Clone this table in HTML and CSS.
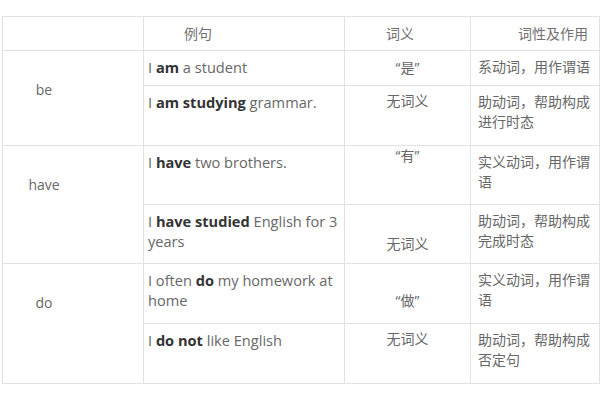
FILE: index.html
```html
<!DOCTYPE html>
<html lang="zh-CN">
<head>
<meta charset="utf-8">
<title>be / have / do</title>
<link rel="stylesheet" href="styles.css">
</head>
<body>
<table class="grid">
  <colgroup>
    <col class="c-word">
    <col class="c-ex">
    <col class="c-mean">
    <col class="c-role">
  </colgroup>
  <tr class="r-head">
    <th class="h-word"></th>
    <th class="h-ex">例句</th>
    <th class="h-mean">词义</th>
    <th class="h-role">词性及作用</th>
  </tr>
  <tr class="r-35">
    <td class="word" rowspan="2">be</td>
    <td class="ex">I <b>am</b> a student</td>
    <td class="mean mid">“是”</td>
    <td class="role">系动词，用作谓语</td>
  </tr>
  <tr class="r-60">
    <td class="ex">I <b>am studying</b> grammar.</td>
    <td class="mean">无词义</td>
    <td class="role">助动词，帮助构成进行时态</td>
  </tr>
  <tr class="r-59">
    <td class="word" rowspan="2">have</td>
    <td class="ex">I <b>have</b> two brothers.</td>
    <td class="mean hi">“有”</td>
    <td class="role">实义动词，用作谓语</td>
  </tr>
  <tr class="r-59">
    <td class="ex">I <b>have studied</b> English for 3 years</td>
    <td class="mean low">无词义</td>
    <td class="role">助动词，帮助构成完成时态</td>
  </tr>
  <tr class="r-60">
    <td class="word" rowspan="2">do</td>
    <td class="ex">I often <b>do</b> my homework at home</td>
    <td class="mean low2">“做”</td>
    <td class="role">实义动词，用作谓语</td>
  </tr>
  <tr class="r-60">
    <td class="ex">I <b>do not</b> like English</td>
    <td class="mean">无词义</td>
    <td class="role">助动词，帮助构成否定句</td>
  </tr>
</table>
</body>
</html>
```

FILE: styles.css
```css
html, body {
  margin: 0;
  padding: 0;
  background: #ffffff;
}

body {
  padding: 16px 0 0 2px;
  font-family: "Open Sans", "Noto Sans CJK SC", sans-serif;
  font-size: 14px;
  line-height: 20px;
  color: #676767;
}

.grid {
  border-collapse: collapse;
  table-layout: fixed;
  width: 597px;
}

.c-word { width: 141px; }
.c-ex { width: 201px; }
.c-mean { width: 126px; }
.c-role { width: 129px; }

.grid th,
.grid td {
  border: 1px solid #e2e2e2;
  vertical-align: top;
  text-align: left;
}

.grid th {
  font-weight: normal;
  vertical-align: middle;
  color: #707070;
  padding: 0;
}

.grid .r-head { height: 34px; }
.grid .r-35 { height: 35px; }
.grid .r-59 { height: 59px; }
.grid .r-60 { height: 60px; }

.grid .h-ex { padding-left: 40px; }
.grid .h-mean { padding-left: 41px; }
.grid .h-role { padding-left: 47px; }

.grid .word {
  text-align: center;
  padding: 29px 58px 0 0;
}

.grid .ex {
  font-size: 14.6px;
  padding: 6px 6px 0 4px;
}

.grid .ex b {
  font-weight: 700;
  color: #333333;
}

.grid .mean {
  text-align: center;
  padding: 5px 0 0 0;
}

.grid .mean.mid { vertical-align: middle; padding-top: 0; }
.grid .mean.hi { padding-top: 0; }
.grid .mean.low { padding-top: 29px; }
.grid .mean.low2 { padding-top: 27px; }

.grid .role {
  padding: 6px 8px 0 7px;
  word-break: break-all;
}
```
